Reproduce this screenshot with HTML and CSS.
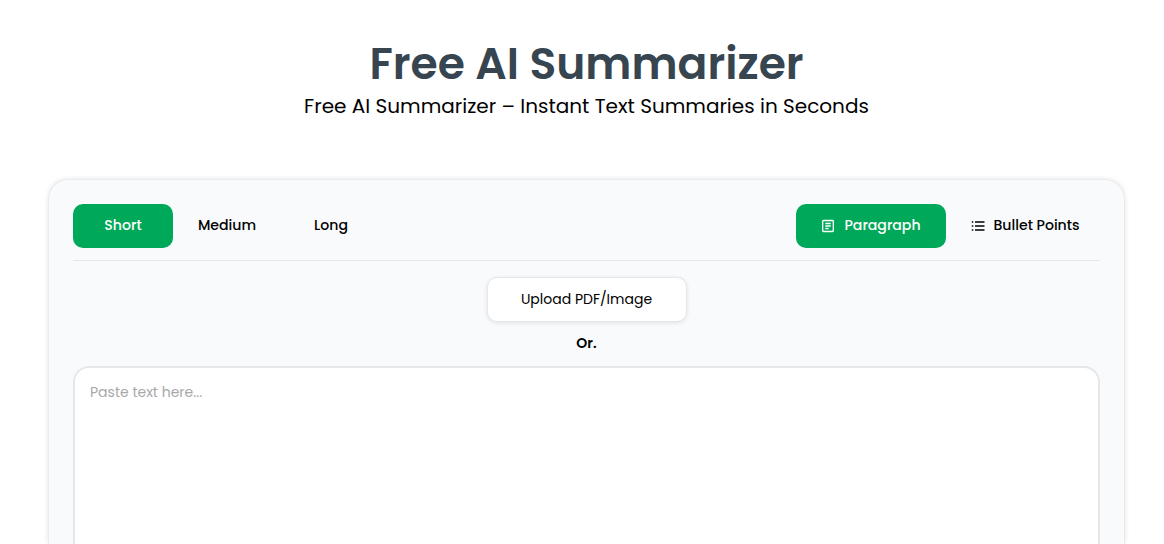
FILE: index.html
```html
<!DOCTYPE html>
<html>
    <head>
        <meta charset="utf-8">
        <title>Free AI Summarizer</title>
        <link rel="stylesheet" href="styles.css">
    </head>
    <body>
        <header class="hero">
            <h1>Free AI Summarizer</h1>
            <p class="subtitle">Free AI Summarizer – Instant Text Summaries in Seconds</p>
        </header>
        <main class="card">
            <div class="toolbar">
                <div class="tabs">
                    <button class="tab active">Short</button>
                    <button class="tab">Medium</button>
                    <button class="tab">Long</button>
                </div>
                <div class="tabs">
                    <button class="tab format active">
                        <svg class="icon" viewBox="0 0 14 14"><path d="M2.500 1.500h9a.8.8 0 0 1 .8.8v9.400a.8.8 0 0 1-.8.8h-9a.8.8 0 0 1-.8-.8V2.300a.8.8 0 0 1 .8-.8zM4.300 4.500h5.400M4.300 7h5.400M4.300 9.500h3.400"/></svg>
                        Paragraph
                    </button>
                    <button class="tab format">
                        <svg class="icon" viewBox="0 0 14 14"><path d="M4 3h9.500M4 7h9.500M4 11h9.500M.8 3h1.500M.8 7h1.500M.8 11h1.500"/></svg>
                        Bullet Points
                    </button>
                </div>
            </div>
            <div class="source">
                <button class="upload">Upload PDF/Image</button>
                <div class="or">Or.</div>
            </div>
            <textarea class="input" placeholder="Paste text here..."></textarea>
        </main>
    </body>
</html>
```

FILE: styles.css
```css
body {
    margin: 0;
    background-color: #ffffff;
    font-family: "Poppins", "Inter", "Open Sans", sans-serif;
    color: #000000;
}
.hero {
    text-align: center;
    padding: 36px 0 0 9px;
}
h1 {
    margin: 0;
    font-size: 44px;
    line-height: 55px;
    font-weight: 600;
    color: #36454f;
}
.subtitle {
    margin: 0;
    font-size: 20px;
    line-height: 30px;
}
.card {
    box-sizing: border-box;
    width: 1077px;
    height: 365px;
    margin: 58px 0 0 48px;
    padding: 24px 24px 0;
    overflow: hidden;
    background-color: #f9fafc;
    border: 1px solid #e9ebee;
    border-bottom: 0;
    border-radius: 20px 20px 0 0;
    box-shadow: 0 0 5px rgba(0, 0, 0, 0.1);
}
.toolbar {
    display: flex;
    justify-content: space-between;
    padding-bottom: 12px;
    border-bottom: 1px solid #e5e7eb;
}
.tabs {
    display: flex;
    gap: 4px;
}
.tab {
    display: flex;
    align-items: center;
    justify-content: center;
    gap: 9px;
    width: 100px;
    height: 44px;
    padding: 0 0 2px;
    border: 0;
    border-radius: 10px;
    background: none;
    font: 500 14.08px "Poppins", "Inter", sans-serif;
    color: #000000;
}
.tab.format {
    width: 150px;
}
.tab.active {
    background-color: #00a859;
    color: #ffffff;
}
.icon {
    width: 14px;
    height: 14px;
    margin-top: 2px;
    fill: none;
    stroke: currentColor;
    stroke-width: 1.3;
}
.source {
    text-align: center;
    padding-top: 16px;
}
.upload {
    width: 200px;
    height: 45px;
    background-color: #ffffff;
    border: 1px solid #e5e7eb;
    border-radius: 10px;
    box-shadow: 0 1px 4px rgba(0, 0, 0, 0.1);
    font: 400 14px "Poppins", "Inter", sans-serif;
    color: #000000;
}
.or {
    margin-top: 11px;
    font-size: 14px;
    line-height: 21px;
    font-weight: 600;
}
.input {
    display: block;
    box-sizing: border-box;
    width: 100%;
    height: 300px;
    margin-top: 12px;
    padding: 14px 15px;
    background-color: #ffffff;
    border: 2px solid #e5e7eb;
    border-radius: 16px;
    resize: none;
    font: 400 14px "Poppins", "Inter", sans-serif;
}
.input::placeholder {
    color: #a8a8a8;
}
```
